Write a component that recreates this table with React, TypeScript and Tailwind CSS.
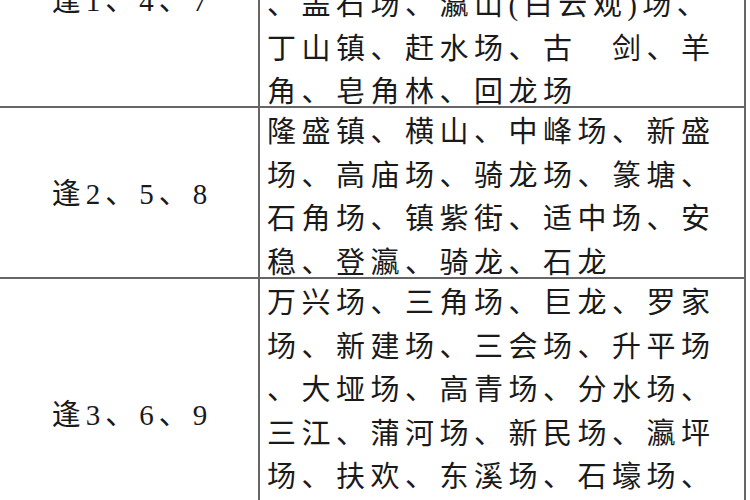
const rows = [
  {
    label: '逢1、4、7',
    height: 'h-[214px]',
    lines: [
      '永新场、古南镇、文龙场、三',
      '溪场、永城场、郭扶场、打通',
      '、盖石场、瀛山(白云观)场、',
      '丁山镇、赶水场、古\u3000剑、羊',
      '角、皂角林、回龙场',
    ],
  },
  {
    label: '逢2、5、8',
    height: 'h-[171px]',
    lines: [
      '隆盛镇、横山、中峰场、新盛',
      '场、高庙场、骑龙场、篆塘、',
      '石角场、镇紫街、适中场、安',
      '稳、登瀛、骑龙、石龙',
    ],
  },
  {
    label: '逢3、6、9',
    height: 'h-[272px]',
    lines: [
      '万兴场、三角场、巨龙、罗家',
      '场、新建场、三会场、升平场',
      '、大垭场、高青场、分水场、',
      '三江、蒲河场、新民场、瀛坪',
      '场、扶欢、东溪场、石壕场、',
      '打通、永城场',
    ],
  },
];

export default function App() {
  return (
    <div
      className="w-[750px] h-[500px] overflow-hidden bg-white text-[#1a1a1a]"
      style={{ fontFamily: '"Liberation Serif", "Noto Sans CJK SC", serif' }}
    >
      <div className="mt-[-106px] w-[746px] border-r-2 border-[#666]">
        {rows.map((row) => (
          <div key={row.label} className={`flex border-b-2 border-[#666] ${row.height}`}>
            {/* market-day label */}
            <div className="w-[260px] shrink-0 flex items-center justify-center border-r-2 border-[#666] text-[29px] tracking-[5px] pl-[6px] pt-[4px]">
              {row.label}
            </div>
            {/* places */}
            <div className="flex-1 pl-[7px] pt-[3px] text-[29px] leading-[43.5px] tracking-[5.5px] whitespace-nowrap">
              {row.lines.map((line, i) => (
                <div key={i}>{line}</div>
              ))}
            </div>
          </div>
        ))}
      </div>
    </div>
  );
}
